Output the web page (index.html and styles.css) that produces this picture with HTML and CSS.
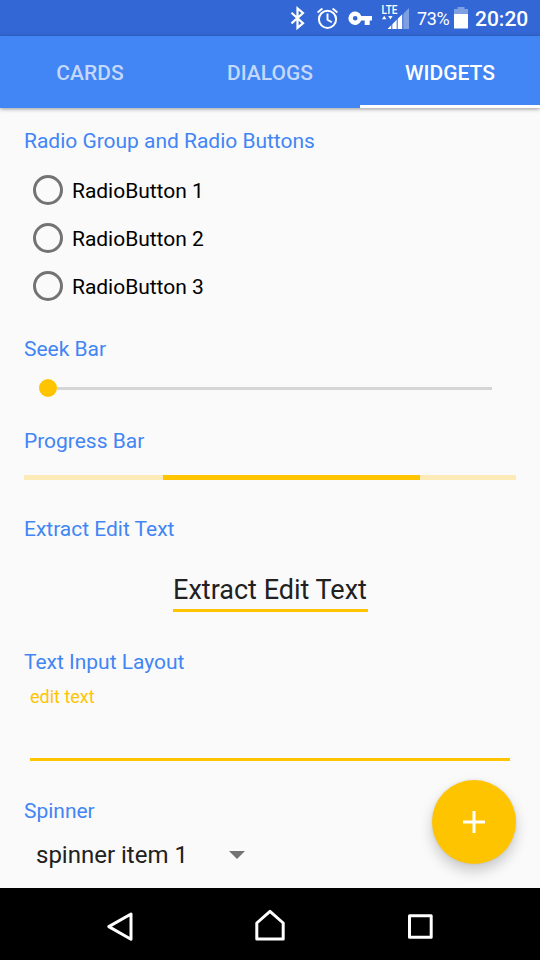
FILE: index.html
```html
<!DOCTYPE html>
<html lang="en">
<head>
<meta charset="utf-8">
<title>Widgets</title>
<link rel="stylesheet" href="styles.css">
</head>
<body>
<div class="screen">
  <header class="status">
    <svg class="status-icons" width="132" height="36" viewBox="280 0 132 36" aria-hidden="true">
      <path d="M291.500 12.800 L303 23.200 L297.500 27.800 V8.400 L303 13 L291.500 23.400" fill="none" stroke="#fff" stroke-width="2.200"/>
      <circle cx="327.500" cy="19.300" r="8.600" fill="none" stroke="#fff" stroke-width="2"/>
      <path d="M327.500 13.500 V19.700 L331.800 22.300 M317.600 12.400 L322.400 8.500 M332.600 8.500 L337.400 12.400" fill="none" stroke="#fff" stroke-width="1.900"/>
      <path fill="#fff" fill-rule="evenodd" d="M361.300 15.900 A6.700 6.700 0 1 0 361.300 20.600 H364.700 V25 H369.700 V20.600 H372 V15.900 Z M355.200 15.900 A2.350 2.350 0 1 1 355.200 20.600 A2.350 2.350 0 1 1 355.200 15.900 Z"/>
      <path d="M409 8 V29 H388 Z" fill="#7f9fe3"/>
      <path d="M380 4 H399 V19 H380 Z" fill="#3367d6"/>
      <path d="M387.500 29 L402.500 14 V29 Z" fill="#fff"/>
      <path d="M391.800 14 V29 M397.200 14 V29 M402.800 13 V29" stroke="#3367d6" stroke-width="1"/>
      <path d="M382 19.200 L384.200 15.800 L386.400 19.200 Z M388.200 16 H392.600 L390.400 19.600 Z" fill="#fff"/>
      <text class="lte" x="381.500" y="14" textLength="16" lengthAdjust="spacingAndGlyphs">LTE</text>
    </svg>
    <span class="percent">73%</span>
    <svg class="battery" width="14" height="22" viewBox="0 0 14 22" aria-hidden="true">
      <path d="M0 2 H3.500 V0 H10.500 V2 H14 V8 H0 Z" fill="#7f9fe3"/>
      <path d="M0 7 H14 V21.500 H0 Z" fill="#fff"/>
    </svg>
    <span class="clock">20:20</span>
  </header>
  <nav class="tabs">
    <div class="tab">CARDS</div>
    <div class="tab">DIALOGS</div>
    <div class="tab tab-active">WIDGETS</div>
  </nav>
  <main class="content">
    <section class="radios">
      <h2>Radio Group and Radio Buttons</h2>
      <div class="radio"><i></i><span>RadioButton 1</span></div>
      <div class="radio"><i></i><span>RadioButton 2</span></div>
      <div class="radio"><i></i><span>RadioButton 3</span></div>
    </section>
    <section class="seek">
      <h2>Seek Bar</h2>
      <div class="seekbar"><i class="thumb"></i><i class="track"></i></div>
    </section>
    <section class="progress">
      <h2>Progress Bar</h2>
      <div class="bar"><i></i></div>
    </section>
    <section class="extract">
      <h2>Extract Edit Text</h2>
      <div class="extract-field">Extract Edit Text</div>
    </section>
    <section class="input">
      <h2>Text Input Layout</h2>
      <div class="field">edit text</div>
    </section>
    <section class="spinner">
      <h2>Spinner</h2>
      <div class="select"><span>spinner item 1</span><i></i></div>
    </section>
  </main>
  <div class="fab">
    <svg width="22" height="22" viewBox="0 0 22 22"><path d="M11 0 V22 M0 11 H22" stroke="#fff" stroke-width="3"/></svg>
  </div>
  <footer class="navbar">
    <svg width="540" height="72" viewBox="0 888 540 72" fill="none" stroke="#fff" stroke-width="3" stroke-linejoin="round">
      <path d="M131 914 V939.200 L108.800 926.600 Z"/>
      <path d="M256.800 939 V923 L270 911.300 L283.200 923 V939 Z"/>
      <path d="M409.500 915.800 H431.200 V937.200 H409.500 Z"/>
    </svg>
  </footer>
</div>
</body>
</html>
```
FILE: styles.css
```css
* { box-sizing: border-box; }
body { margin: 0; font-family: Roboto, sans-serif; }
.screen {
  position: relative;
  display: flex;
  flex-direction: column;
  width: 540px;
  height: 960px;
  overflow: hidden;
  background: #fafafa;
}
.status {
  display: flex;
  align-items: center;
  height: 36px;
  padding-left: 280px;
  background: #3367d6;
  color: #fff;
  white-space: nowrap;
}
.status-icons { flex: none; }
.lte { font: 500 13.5px Roboto, sans-serif; fill: #fff; }
.percent { width: 42px; padding: 2px 0 0 5px; font-size: 18px; line-height: 24px; letter-spacing: -0.4px; }
.battery { flex: none; margin-top: -1px; }
.clock { padding-top: 2px; margin-left: 7px; font-size: 21px; font-weight: 500; line-height: 24px; }
.tabs {
  display: flex;
  height: 72px;
  background: #4285f4;
  box-shadow: 0 1px 4px rgba(0, 0, 0, 0.4);
}
.tab {
  flex: 1;
  text-align: center;
  font-size: 21px;
  font-weight: 500;
  line-height: 75px;
  color: rgba(255, 255, 255, 0.7);
}
.tab-active { height: 72px; color: #fff; border-bottom: 3px solid #fff; }
.content { flex: 1; padding: 21px 24px 0; }
h2 { margin: 0; font-size: 21px; font-weight: 400; line-height: 24px; letter-spacing: -0.02px; color: #4285f4; }
.radios { height: 208px; }
.radios h2 { margin-bottom: 13px; }
.radio { display: flex; align-items: center; height: 48px; padding-left: 9px; font-size: 21px; letter-spacing: -0.03px; }
.radio i { width: 30px; height: 30px; border: 3px solid #737373; border-radius: 50%; }
.radio span { padding-top: 1px; margin-left: 9px; color: #000; }
.seek { height: 92px; }
.seekbar { display: flex; align-items: center; height: 18px; margin: 18px 24px 0 15px; }
.thumb { width: 18px; height: 18px; border-radius: 50%; background: #ffc400; }
.track { flex: 1; height: 3px; background: #d5d5d5; }
.progress { height: 88px; }
.bar { height: 5px; margin-top: 22px; padding: 0 96px 0 139px; background: #fdebb7; }
.bar i { display: block; height: 5px; background: #ffc400; }
.extract { height: 133px; }
.extract-field {
  width: 195px;
  height: 44px;
  margin: 27px auto 0;
  border-bottom: 3px solid #ffc400;
  font-size: 27px;
  line-height: 44px;
  text-align: center;
  white-space: nowrap;
  color: #212121;
}
.input { height: 149px; }
.field {
  height: 76px;
  margin: 11px 6px 0;
  border-bottom: 3px solid #ffc400;
  font-size: 18px;
  line-height: 24px;
  color: #ffc400;
}
.select { display: flex; align-items: center; height: 48px; margin-top: 8px; padding-left: 12px; }
.select span { width: 193px; font-size: 24px; color: #212121; }
.select i { margin-top: -1px; border: 7.5px solid transparent; border-width: 8px 8px 0; border-top-color: #737373; }
.fab {
  position: absolute;
  left: 432px;
  top: 780px;
  display: flex;
  align-items: center;
  justify-content: center;
  width: 84px;
  height: 84px;
  border-radius: 50%;
  background: #ffc400;
  box-shadow: 0 7px 14px rgba(0, 0, 0, 0.2), 0 0 3px rgba(0, 0, 0, 0.1);
}
.navbar { position: relative; height: 72px; background: #000; }
.navbar svg { display: block; }
```
